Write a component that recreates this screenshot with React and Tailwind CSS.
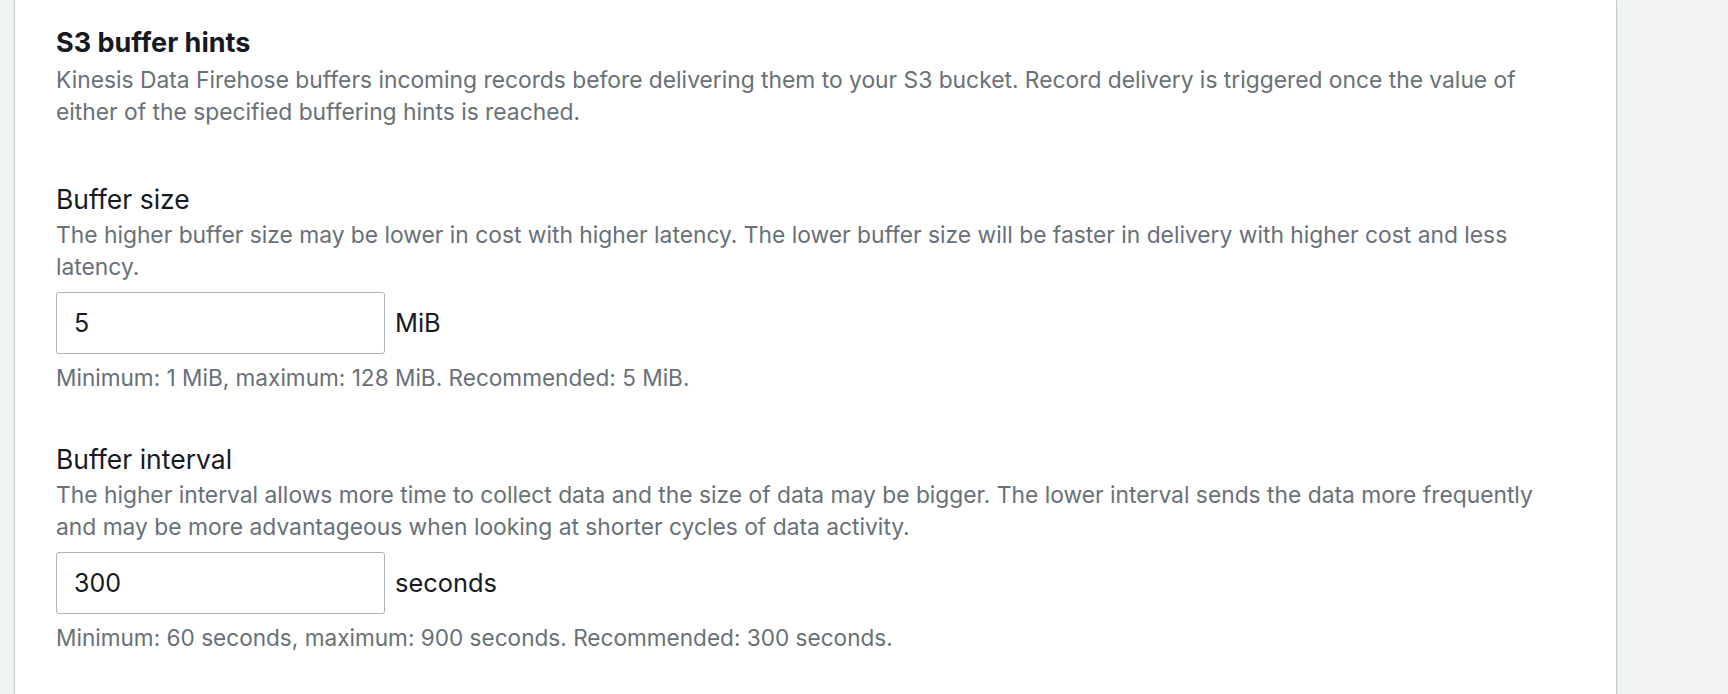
import React from 'react';

const fields = [
  {
    label: 'Buffer size',
    desc: 'The higher buffer size may be lower in cost with higher latency. The lower buffer size will be faster in delivery with higher cost and less latency.',
    value: '5',
    unit: 'MiB',
    hint: 'Minimum: 1 MiB, maximum: 128 MiB. Recommended: 5 MiB.',
  },
  {
    label: 'Buffer interval',
    desc: 'The higher interval allows more time to collect data and the size of data may be bigger. The lower interval sends the data more frequently and may be more advantageous when looking at shorter cycles of data activity.',
    value: '300',
    unit: 'seconds',
    hint: 'Minimum: 60 seconds, maximum: 900 seconds. Recommended: 300 seconds.',
  },
];

const Field = ({ field, first }) => (
  <div className={first ? 'mt-[55px]' : 'mt-[49px]'}>
    <label className="block text-[26.5px] leading-[32px] text-[#16191f]">{field.label}</label>
    <p className="mt-[4px] text-[22.8px] leading-[32px] text-[#687078]">{field.desc}</p>
    <div className="mt-[9px] flex items-center gap-[10px]">
      <input
        type="text"
        defaultValue={field.value}
        className="h-[62px] w-[329px] rounded-[3px] border border-[#aab7b8] bg-white pl-[17px] text-[25px] text-[#16191f] outline-none"
      />
      <span className="text-[25.4px] leading-[32px] text-[#16191f]">{field.unit}</span>
    </div>
    <p className="mt-[8px] text-[22.6px] leading-[32px] text-[#687078]">{field.hint}</p>
  </div>
);

export default function App() {
  return (
    <div className="flex h-[694px] overflow-hidden bg-[#f2f3f3]" style={{ fontFamily: 'Inter, sans-serif' }}>
      <div className="ml-[14px] w-[1603px] border-x border-[#c6cbcb] bg-white pl-[41px] pr-[47px] pt-[27px] shadow-[0_1px_1px_rgba(0,28,36,0.2)]">
        {/* Section header */}
        <h2 className="text-[27px] font-bold leading-[32px] text-[#16191f]">S3 buffer hints</h2>
        <p className="mt-[5px] text-[22.8px] leading-[32px] text-[#687078]">
          Kinesis Data Firehose buffers incoming records before delivering them to your S3 bucket. Record delivery is triggered once the value of either of the specified buffering hints is reached.
        </p>

        {fields.map((f, i) => (
          <Field key={f.label} field={f} first={i === 0} />
        ))}
      </div>
    </div>
  );
}
